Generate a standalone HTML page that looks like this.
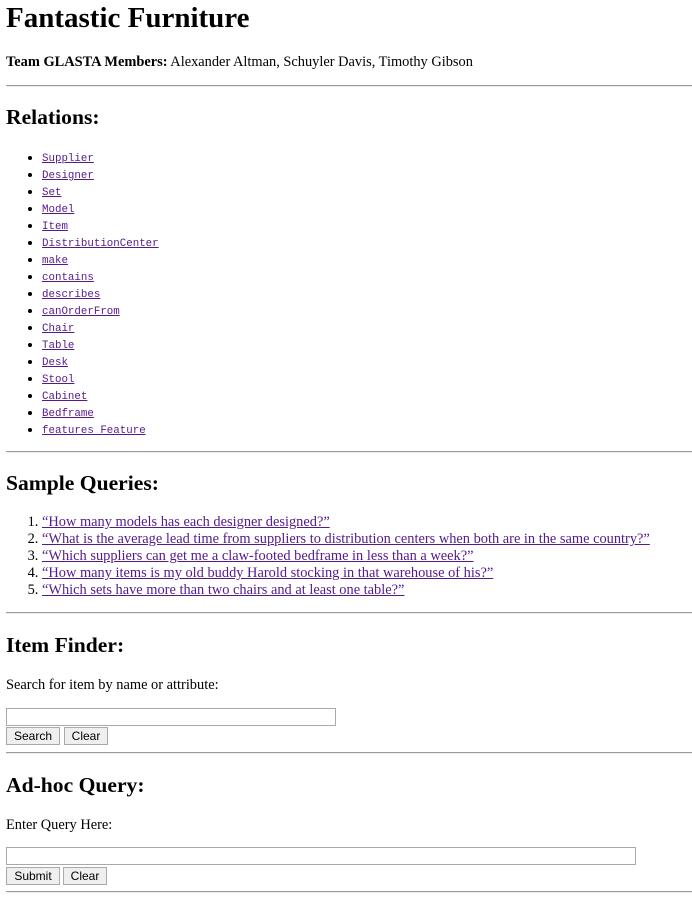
<!DOCTYPE html>
<html><head><meta charset="utf-8"><style>
body{margin:0;width:692px;height:909px;position:relative;font-family:"Liberation Serif",serif;font-size:14.4px;color:#000;background:#fff}
.a{position:absolute;left:6px;white-space:nowrap}
h1,h2{margin:0;font-weight:bold}
h1{font-size:29px;line-height:32px}
h2{font-size:21.6px;line-height:26px}
hr{position:absolute;left:6px;width:686px;margin:0;border:0;border-top:1px solid #9a9a9a;border-bottom:1px solid #eee;height:0}
a{color:#551a8b}
ul{margin:0;padding-left:42px;list-style:disc;line-height:17px}
ul li{font-family:"Liberation Mono",monospace;font-size:10.8px;line-height:17px;height:17px}
ul li::marker{font-size:13px}
ol{margin:0;padding-left:42px}
ol li{line-height:17px;height:17px}
input[type=text]{position:absolute;left:6px;height:18px;box-sizing:border-box;border:1px solid #a9a9a9;margin:0;padding:0}
button{position:absolute;height:18px;box-sizing:border-box;font-family:"Liberation Sans",sans-serif;font-size:12px;padding:0;border:1px solid #a9a9a9;background:#efefef;border-radius:0;line-height:15px}
</style></head><body>
<h1 class="a" style="top:2px">Fantastic Furniture</h1>
<div class="a" style="top:54px"><b>Team GLASTA Members:</b> Alexander Altman, Schuyler Davis, Timothy Gibson</div>
<hr style="top:85px">
<h2 class="a" style="top:104px">Relations:</h2>
<ul class="a" style="left:0;top:149px">
<li><a href="#">Supplier</a></li><li><a href="#">Designer</a></li><li><a href="#">Set </a></li><li><a href="#">Model</a></li><li><a href="#">Item</a></li><li><a href="#">DistributionCenter</a></li><li><a href="#">make</a></li><li><a href="#">contains </a></li><li><a href="#">describes</a></li><li><a href="#">canOrderFrom</a></li><li><a href="#">Chair</a></li><li><a href="#">Table </a></li><li><a href="#">Desk</a></li><li><a href="#">Stool</a></li><li><a href="#">Cabinet</a></li><li><a href="#">Bedframe</a></li><li><a href="#">features Feature</a></li>
</ul>
<hr style="top:451px">
<h2 class="a" style="top:470px">Sample Queries:</h2>
<ol class="a" style="left:0;top:514px">
<li><a href="#">“How many models has each designer designed?”</a></li>
<li><a href="#">“What is the average lead time from suppliers to distribution centers when both are in the same country?”</a></li>
<li><a href="#">“Which suppliers can get me a claw-footed bedframe in less than a week?”</a></li>
<li><a href="#">“How many items is my old buddy Harold stocking in that warehouse of his?”</a></li>
<li><a href="#">“Which sets have more than two chairs and at least one table?”</a></li>
</ol>
<hr style="top:612px">
<h2 class="a" style="top:632px">Item Finder:</h2>
<div class="a" style="top:677px">Search for item by name or attribute:</div>
<input type="text" style="top:708px;width:330px">
<button style="left:6px;top:727px;width:54px">Search</button>
<button style="left:64px;top:727px;width:44px">Clear</button>
<hr style="top:752px">
<h2 class="a" style="top:772px">Ad-hoc Query:</h2>
<div class="a" style="top:817px">Enter Query Here:</div>
<input type="text" style="top:847px;width:630px">
<button style="left:6px;top:867px;width:54px">Submit</button>
<button style="left:63px;top:867px;width:44px">Clear</button>
<hr style="top:891px">
</body></html>
